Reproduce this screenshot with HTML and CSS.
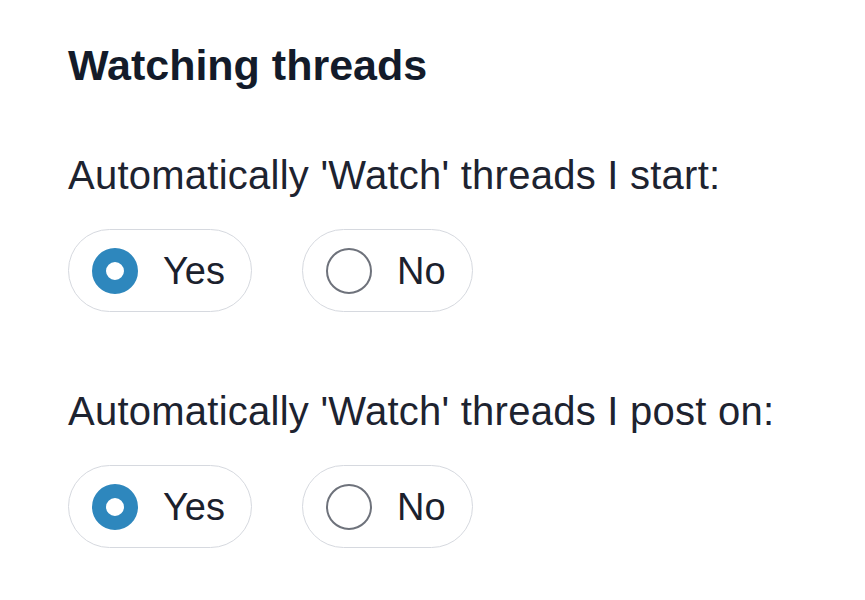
FILE: index.html
```html
<!DOCTYPE html>
<html lang="en">
<head>
<meta charset="utf-8">
<title>Watching threads</title>
<link rel="stylesheet" href="styles.css">
</head>
<body>
<section class="panel">
  <h2 class="title">Watching threads</h2>

  <div class="field field-first">
    <p class="field-label">Automatically 'Watch' threads I start:</p>
    <div class="choices">
      <label class="pill"><input class="radio" type="radio" name="start" checked><span class="pill-text">Yes</span></label>
      <label class="pill"><input class="radio" type="radio" name="start"><span class="pill-text">No</span></label>
    </div>
  </div>

  <div class="field field-second">
    <p class="field-label">Automatically 'Watch' threads I post on:</p>
    <div class="choices">
      <label class="pill"><input class="radio" type="radio" name="post" checked><span class="pill-text">Yes</span></label>
      <label class="pill"><input class="radio" type="radio" name="post"><span class="pill-text">No</span></label>
    </div>
  </div>
</section>
</body>
</html>
```

FILE: styles.css
```css
html, body {
  margin: 0;
  padding: 0;
  background: #ffffff;
}

body {
  font-family: "Liberation Sans", Arial, sans-serif;
  color: #1b212d;
}

.panel {
  padding: 40px 0 0 68px;
}

.title {
  margin: 0;
  font-size: 43px;
  line-height: 50px;
  font-weight: 700;
  color: #131b2a;
}

.field-first {
  margin-top: 61px;
}

.field-second {
  margin-top: 75px;
}

.field-label {
  margin: 0;
  font-size: 40px;
  line-height: 48px;
  letter-spacing: 0.25px;
  color: #1d2330;
}

.choices {
  display: flex;
  gap: 50px;
  margin-top: 30px;
}

.pill {
  display: flex;
  align-items: center;
  gap: 25px;
  box-sizing: border-box;
  height: 83px;
  padding: 0 26px 0 23px;
  border: 1.5px solid #d6d9df;
  border-radius: 42px;
  background: #ffffff;
}

.radio {
  appearance: none;
  -webkit-appearance: none;
  margin: 0;
  box-sizing: border-box;
  width: 46px;
  height: 46px;
  border-radius: 50%;
  border: 2px solid #6e727b;
  background: #ffffff;
}

.radio:checked {
  border: 14.5px solid #2e87bd;
}

.pill-text {
  font-size: 38px;
  line-height: 46px;
  color: #1b212d;
}
```
